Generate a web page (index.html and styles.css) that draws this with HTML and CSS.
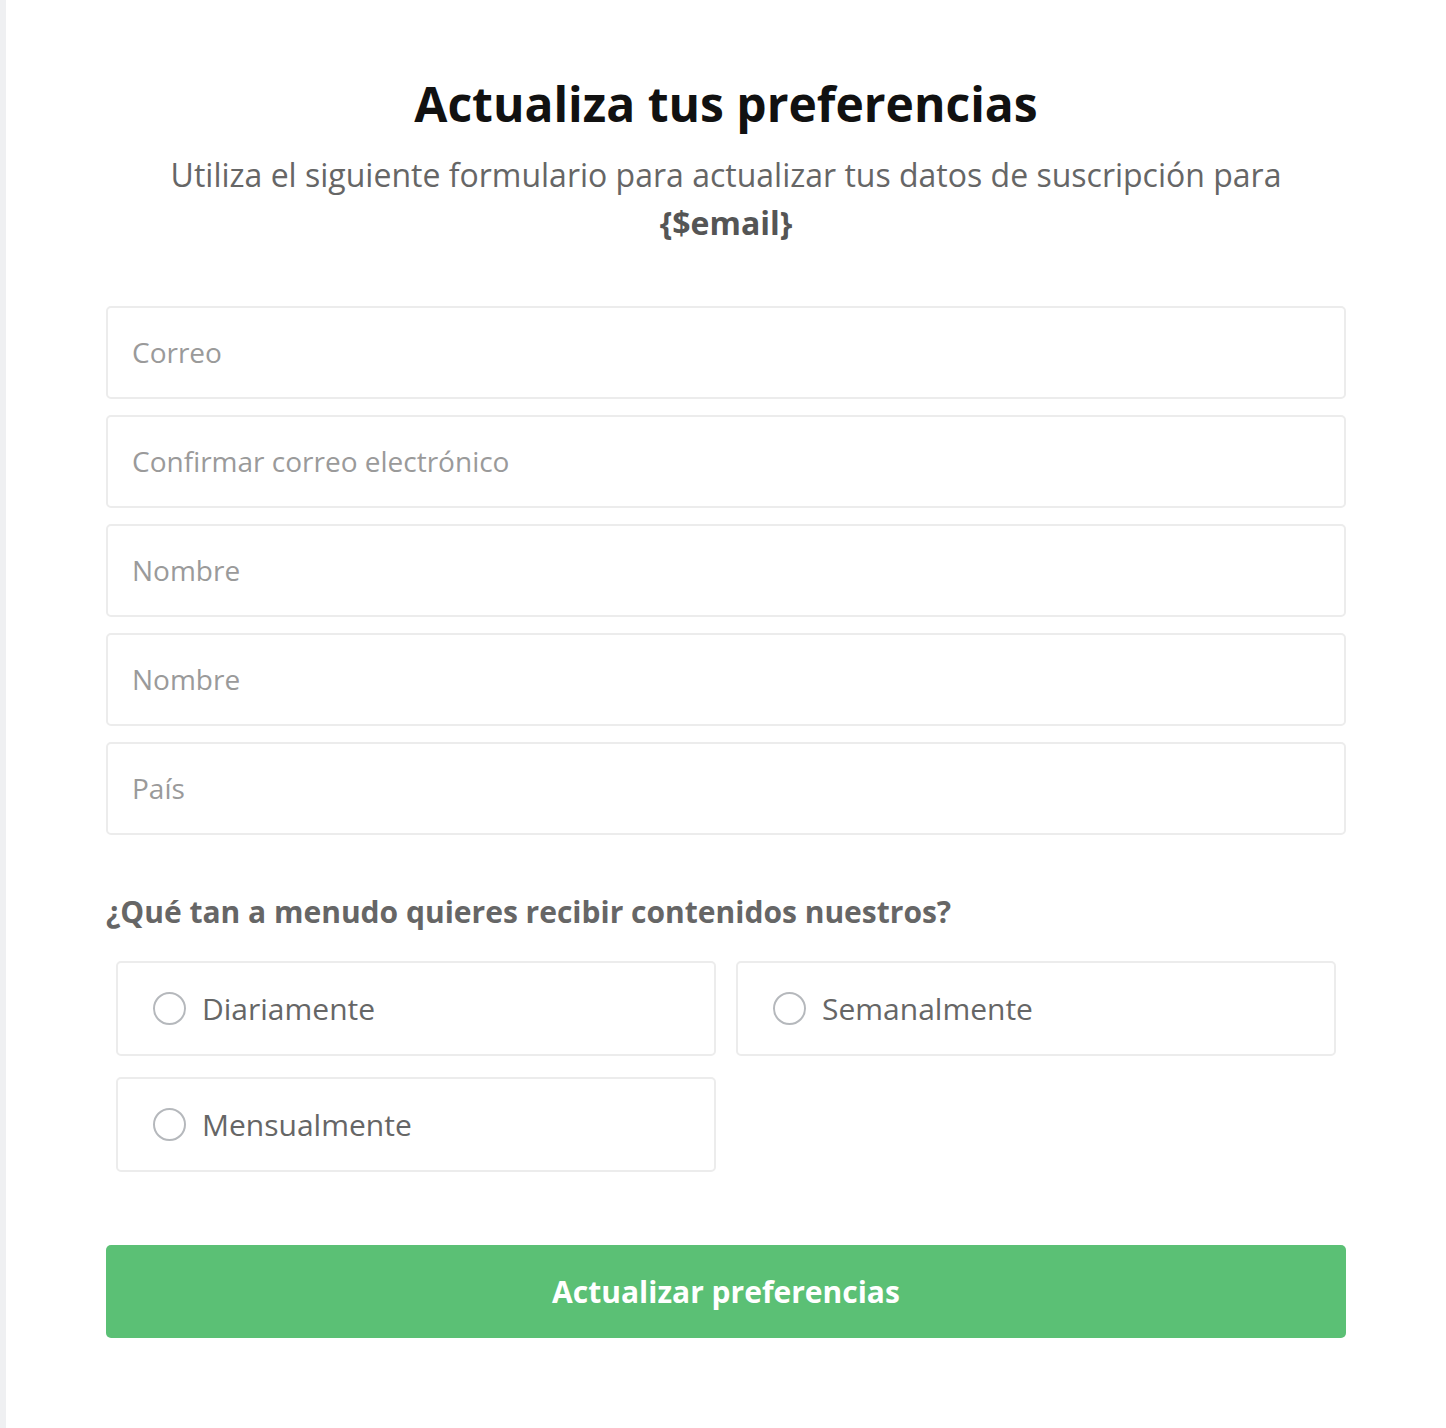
FILE: index.html
```html
<!DOCTYPE html>
<html lang="es">
<head>
<meta charset="utf-8">
<title>Actualiza tus preferencias</title>
<link rel="stylesheet" href="styles.css">
</head>
<body>
<main class="page">
  <div class="container">
    <h1 class="title">Actualiza tus preferencias</h1>
    <p class="subtitle">Utiliza el siguiente formulario para actualizar tus datos de suscripción para <strong>{$email}</strong></p>
    <form class="form">
      <input class="field" type="email" placeholder="Correo">
      <input class="field" type="email" placeholder="Confirmar correo electrónico">
      <input class="field" type="text" placeholder="Nombre">
      <input class="field" type="text" placeholder="Nombre">
      <input class="field" type="text" placeholder="País">
      <p class="question">¿Qué tan a menudo quieres recibir contenidos nuestros?</p>
      <div class="options">
        <label class="option"><input type="radio" name="freq"><span class="dot"></span><span class="label">Diariamente</span></label>
        <label class="option"><input type="radio" name="freq"><span class="dot"></span><span class="label">Semanalmente</span></label>
        <label class="option"><input type="radio" name="freq"><span class="dot"></span><span class="label">Mensualmente</span></label>
      </div>
      <button class="submit" type="button">Actualizar preferencias</button>
    </form>
  </div>
</main>
</body>
</html>
```
FILE: styles.css
```css
* { box-sizing: border-box; }
html, body { margin: 0; padding: 0; }
body {
  background: #eff0f2;
  font-family: "Open Sans", "Noto Sans", sans-serif;
}
.page {
  margin-left: 6px;
  background: #fff;
  min-height: 100vh;
  padding: 0 100px;
}
.container {
  padding-top: 72px;
  padding-bottom: 40px;
}
.title {
  margin: 0;
  text-align: center;
  font-size: 48px;
  line-height: 64px;
  font-weight: 700;
  color: #111;
}
.subtitle {
  margin: 15px 0 0;
  text-align: center;
  font-size: 32px;
  line-height: 48px;
  color: #666;
}
.subtitle strong { font-weight: 700; color: #555; }
.form {
  margin-top: 59px;
  display: flex;
  flex-direction: column;
}
.field {
  display: block;
  width: 100%;
  height: 93px;
  margin: 0 0 16px;
  padding: 0 24px 2px;
  border: 2px solid #ececec;
  border-radius: 5px;
  font-family: inherit;
  font-size: 28px;
  color: #333;
  background: #fff;
  outline: none;
}
.field::placeholder { color: #9a9a9a; }
.question {
  margin: 40px 0 0;
  font-size: 30px;
  line-height: 42px;
  font-weight: 700;
  color: #666;
}
.options {
  margin-top: 28px;
  padding: 0 10px;
  display: grid;
  grid-template-columns: 1fr 1fr;
  gap: 21px 20px;
}
.option {
  display: flex;
  align-items: center;
  height: 95px;
  padding: 0 35px;
  border: 2px solid #ececec;
  border-radius: 5px;
  cursor: pointer;
}
.option input { display: none; }
.dot {
  width: 33px;
  height: 33px;
  border: 2px solid #b5b8bc;
  border-radius: 50%;
  flex: none;
  margin-right: 16px;
}
.label {
  font-size: 30px;
  color: #666;
}
.submit {
  margin-top: 73px;
  width: 100%;
  height: 93px;
  border: none;
  border-radius: 5px;
  background: #5bc075;
  color: #fff;
  font-family: inherit;
  font-size: 30px;
  font-weight: 700;
  cursor: pointer;
}
```
